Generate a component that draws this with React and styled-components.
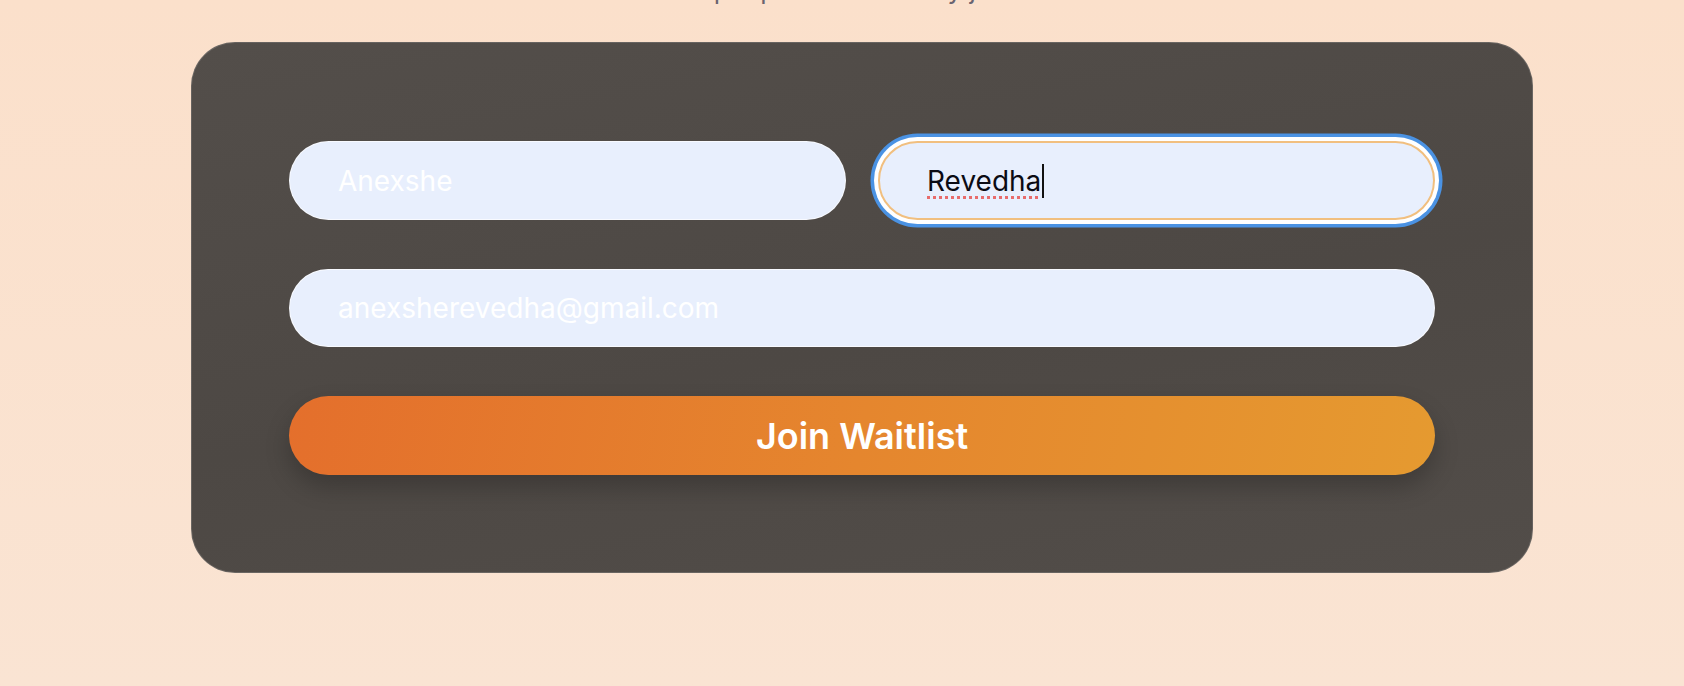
import React from "react";
import styled, { createGlobalStyle } from "styled-components";

const GlobalStyle = createGlobalStyle`
  html, body {
    margin: 0;
    padding: 0;
    background: #fbe1cd;
    font-family: Inter, "Noto Sans", sans-serif;
    overflow: hidden;
  }
`;

const Page = styled.main`
  min-height: 686px;
  display: flex;
  flex-direction: column;
  align-items: center;
  padding-left: 40px;
  background: linear-gradient(180deg, #fbe0cb 0%, #fae4d3 100%);
`;

const Subtitle = styled.p`
  margin: -26px 0 36px;
  font-size: 26px;
  line-height: 32px;
  color: #6a6470;
`;

const Card = styled.form`
  box-sizing: border-box;
  width: 1342px;
  height: 531px;
  padding: 98px 97px 97px;
  display: flex;
  flex-direction: column;
  gap: 49px;
  background: linear-gradient(170deg, #534e4a 0%, #4d4844 55%, #524d49 100%);
  border: 1px solid rgba(255, 255, 255, 0.14);
  border-radius: 44px;
`;

const Row = styled.div`
  display: grid;
  grid-template-columns: 1fr 1fr;
  gap: 32px;
`;

const Input = styled.input`
  box-sizing: border-box;
  width: 100%;
  height: 79px;
  padding: 0 48px;
  border: 1px solid rgba(255, 255, 255, 0.7);
  border-radius: 40px;
  background: #e8effd;
  color: #ffffff;
  font-family: Inter, "Noto Sans", sans-serif;
  font-size: 28px;
  outline: none;
  &::placeholder {
    color: #ffffff;
  }
`;

const FocusedField = styled.div`
  box-sizing: border-box;
  height: 79px;
  padding: 0 47px;
  display: flex;
  align-items: center;
  border: 2px solid #f1bf7f;
  border-radius: 40px;
  background: #e8effd;
  box-shadow: 0 0 0 4px #ffffff, 0 0 0 7.5px #4a92e3;
  font-size: 28px;
  color: #0b0b14;
`;

const Typed = styled.span`
  text-decoration: underline dotted #e86c6c;
  text-decoration-thickness: 3px;
  text-underline-offset: 5px;
`;

const Caret = styled.span`
  width: 2px;
  height: 34px;
  margin-left: 1px;
  background: #111;
`;

const Button = styled.button`
  height: 80px;
  border: none;
  border-radius: 40px;
  background: linear-gradient(100deg, #e46f2c 0%, #e5862e 50%, #e59a30 100%);
  box-shadow: 0 12px 24px rgba(0, 0, 0, 0.22);
  color: #ffffff;
  font-family: Inter, "Noto Sans", sans-serif;
  font-size: 36px;
  font-weight: 600;
  cursor: pointer;
`;

export default function App() {
  return (
    <>
      <GlobalStyle />
      <Page>
        <Subtitle>12 people have already joined</Subtitle>
        <Card onSubmit={(e) => e.preventDefault()}>
          <Row>
            <Input defaultValue="Anexshe" aria-label="First name" />
            <FocusedField aria-label="Last name">
              <Typed>Revedha</Typed>
              <Caret />
            </FocusedField>
          </Row>
          <Input defaultValue="anexsherevedha@gmail.com" aria-label="Email" />
          <Button type="submit">Join Waitlist</Button>
        </Card>
      </Page>
    </>
  );
}
